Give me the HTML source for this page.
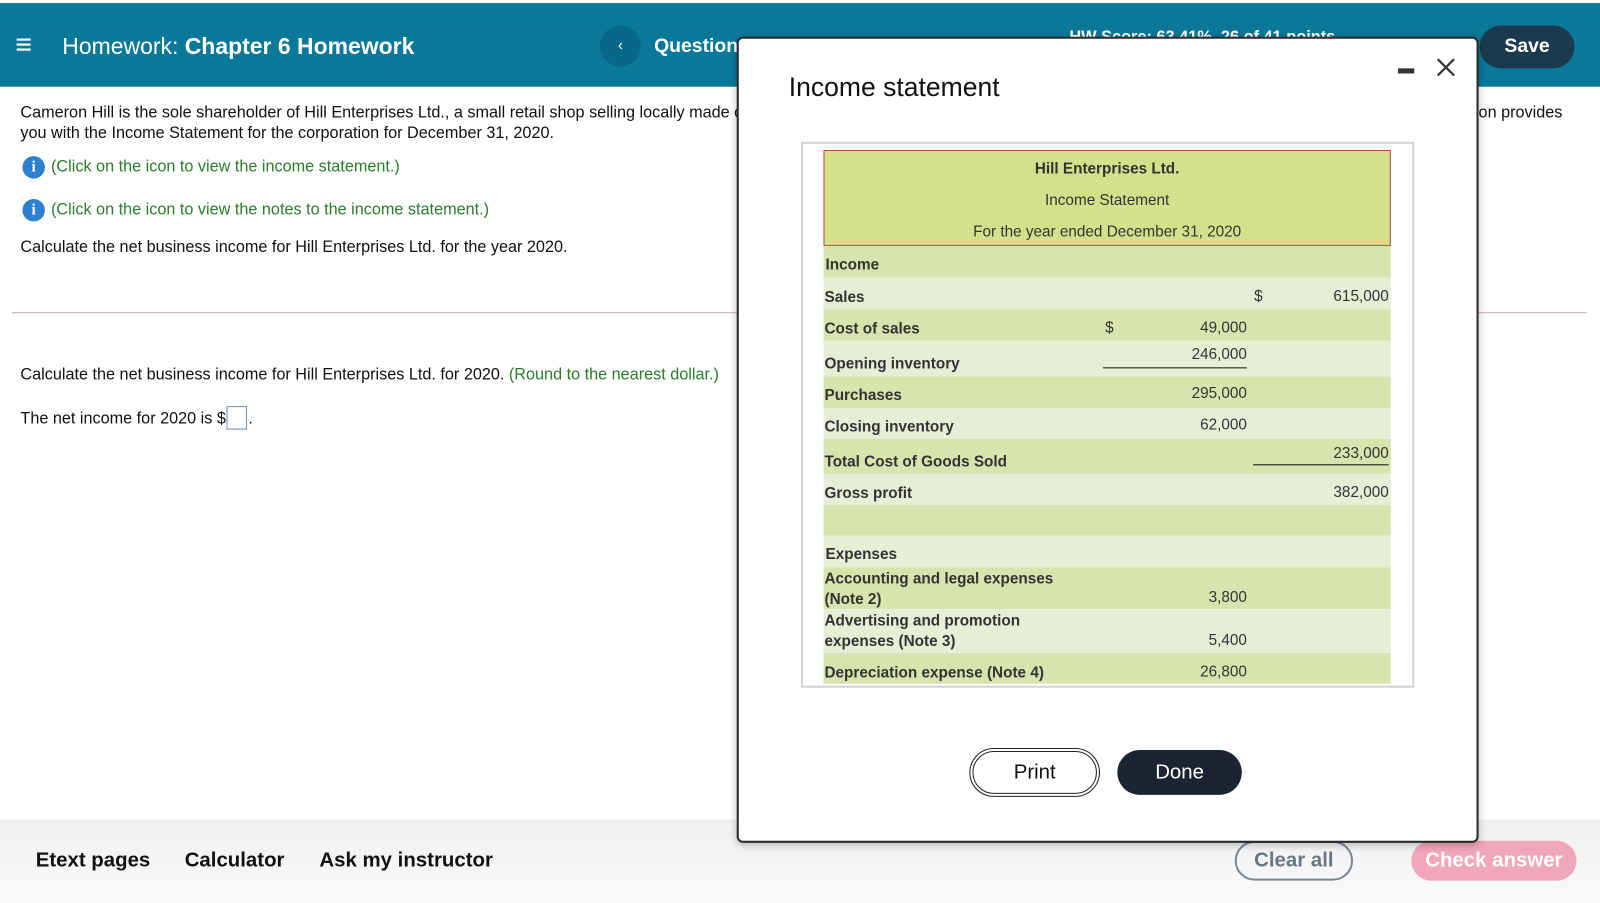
<!DOCTYPE html>
<html><head><meta charset="utf-8"><style>
*{margin:0;padding:0;box-sizing:border-box}
html,body{width:1600px;height:903px;overflow:hidden;background:#fff;font-family:"Liberation Sans",Arial,sans-serif}
#w{position:absolute;left:0;top:0;width:1568px;height:885px;transform:scale(1.0204);transform-origin:0 0}
.a{position:absolute;white-space:nowrap}
.t{font-size:15.9px;color:#111}
.g,.t.g{color:#2a7d2a}
.r{position:absolute;left:807px;width:556px}
.d{background:#d8e4ad}.l{background:#e6efd6}
.lb{position:absolute;left:1px;font-size:15px;font-weight:bold;color:#333;white-space:nowrap}
.v{position:absolute;font-size:15px;color:#333;text-align:right;white-space:nowrap}
.c1{right:141px}.c2{right:2px}
.info{position:absolute;width:22px;height:22px;border-radius:50%;background:#2f7fd0;color:#fff;font:bold 15px "Liberation Serif",serif;text-align:center;line-height:22px}
</style></head><body><div id="w">
<div class="a" style="left:0;top:3px;width:1568px;height:82px;background:#0a7899"></div>
<div class="a" style="left:15px;top:29px;color:#fff;font-size:28px;line-height:30px">&#8801;</div>
<div class="a" style="left:61px;top:33px;color:#fff;font-size:22.5px">Homework: <b>Chapter 6 Homework</b></div>
<div class="a" style="left:588px;top:25px;width:40px;height:40px;border-radius:50%;background:#086888;color:#fff;text-align:center;line-height:40px;font-size:15px">&#8249;</div>
<div class="a" style="left:641px;top:35px;color:#fff;font-size:19px;font-weight:bold">Question 3</div>
<div class="a" style="left:1048px;top:28px;color:#fff;font-size:16px;font-weight:bold">HW Score: 63.41%, 26 of 41 points</div>
<div class="a" style="left:1450px;top:25px;width:93px;height:42px;border-radius:21px;background:#1c3a4e;color:#fff;font-size:19px;font-weight:bold;text-align:center;line-height:42px">Save</div>

<div class="a t" style="left:20px;top:101px;line-height:20px">Cameron Hill is the sole shareholder of Hill Enterprises Ltd., a small retail shop selling locally made crafts. Her accountant, who has just completed the year-end work<br>you with the Income Statement for the corporation for December 31, 2020.</div>
<div class="a t" style="left:1449px;top:101px;line-height:20px;background:#fff;width:119px">on provides</div>
<div class="info" style="left:22px;top:153px">i</div>
<div class="a t g" style="left:50px;top:155px">(Click on the icon to view the income statement.)</div>
<div class="info" style="left:22px;top:195px">i</div>
<div class="a t g" style="left:50px;top:197px">(Click on the icon to view the notes to the income statement.)</div>
<div class="a t" style="left:20px;top:234px">Calculate the net business income for Hill Enterprises Ltd. for the year 2020.</div>
<div class="a" style="left:12px;top:306px;width:1543px;height:1px;background:#cfa6a6"></div>
<div class="a t" style="left:20px;top:359px">Calculate the net business income for Hill Enterprises Ltd. for 2020. <span class="g">(Round to the nearest dollar.)</span></div>
<div class="a t" style="left:20px;top:398px">The net income for 2020 is $<span style="display:inline-block;width:20px;height:23px;border:1px solid #6a8fb8;vertical-align:-6px;margin:0 1px"></span>.</div>

<div class="a" style="left:0;top:803px;width:1568px;height:82px;background:linear-gradient(#f0f0f0,#fafafa)"></div>
<div class="a" style="left:35px;top:832px;font-size:20px;font-weight:bold;color:#111">Etext pages</div>
<div class="a" style="left:181px;top:832px;font-size:20px;font-weight:bold;color:#111">Calculator</div>
<div class="a" style="left:313px;top:832px;font-size:20px;font-weight:bold;color:#111">Ask my instructor</div>
<div class="a" style="left:1210px;top:824px;width:116px;height:39px;border:2px solid #7a8794;border-radius:20px;color:#6b7684;font-size:20px;font-weight:bold;text-align:center;line-height:35px">Clear all</div>
<div class="a" style="left:1383px;top:824px;width:162px;height:39px;border-radius:20px;background:#f1a6b9;color:#fff;font-size:20px;font-weight:bold;text-align:center;line-height:39px">Check answer</div>

<div class="a" style="left:722px;top:36px;width:727px;height:790px;background:#fff;border:2px solid #2a2a2a;border-radius:6px;box-shadow:0 2px 8px rgba(0,0,0,.25)"></div>
<div class="a" style="left:773px;top:70px;font-size:26px;color:#111">Income statement</div>
<div class="a" style="left:1370px;top:67px;width:16px;height:5px;background:#333"></div>
<svg class="a" style="left:1408px;top:57px" width="18" height="18"><path d="M1 1L17 17M17 1L1 17" stroke="#333" stroke-width="2.2"/></svg>

<div class="a" style="left:785px;top:139px;width:601px;height:535px;border:2px solid #d4d4d4"></div>
<div class="a" style="left:807px;top:147px;width:556px;height:94px;background:#d4e08a;border:1px solid #b5493e"></div>
<div class="a" style="left:807px;top:157px;width:556px;text-align:center;font-size:15px;font-weight:bold;color:#333">Hill Enterprises Ltd.</div>
<div class="a" style="left:807px;top:188px;width:556px;text-align:center;font-size:15px;color:#333">Income Statement</div>
<div class="a" style="left:807px;top:219px;width:556px;text-align:center;font-size:15px;color:#333">For the year ended December 31, 2020</div>

<div class="r d" style="top:241px;height:31px"><div class="lb" style="top:10px;left:2px">Income</div></div>
<div class="r l" style="top:272px;height:31px"><div class="lb" style="top:11px">Sales</div><div class="v" style="left:422px;top:10px">$</div><div class="v c2" style="top:10px">615,000</div></div>
<div class="r d" style="top:303px;height:31px"><div class="lb" style="top:11px">Cost of sales</div><div class="v" style="left:276px;top:10px">$</div><div class="v c1" style="top:10px">49,000</div></div>
<div class="r l" style="top:334px;height:35px"><div class="lb" style="top:14px">Opening inventory</div><div class="v c1" style="top:5px">246,000</div><div class="a" style="left:274px;top:26px;width:141px;height:1px;background:#111"></div></div>
<div class="r d" style="top:369px;height:31px"><div class="lb" style="top:10px">Purchases</div><div class="v c1" style="top:8px">295,000</div></div>
<div class="r l" style="top:400px;height:30px"><div class="lb" style="top:10px">Closing inventory</div><div class="v c1" style="top:8px">62,000</div></div>
<div class="r d" style="top:430px;height:34px"><div class="lb" style="top:14px">Total Cost of Goods Sold</div><div class="v c2" style="top:6px">233,000</div><div class="a" style="left:421px;top:25px;width:133px;height:1px;background:#111"></div></div>
<div class="r l" style="top:464px;height:31px"><div class="lb" style="top:11px">Gross profit</div><div class="v c2" style="top:10px">382,000</div></div>
<div class="r d" style="top:495px;height:30px"></div>
<div class="r l" style="top:525px;height:31px"><div class="lb" style="top:10px;left:2px">Expenses</div></div>
<div class="r d" style="top:556px;height:41px"><div class="lb" style="top:2px;line-height:20px">Accounting and legal expenses<br>(Note 2)</div><div class="v c1" style="top:21px">3,800</div></div>
<div class="r l" style="top:597px;height:43px"><div class="lb" style="top:2px;line-height:20px">Advertising and promotion<br>expenses (Note 3)</div><div class="v c1" style="top:22px">5,400</div></div>
<div class="r d" style="top:640px;height:30px"><div class="lb" style="top:11px">Depreciation expense (Note 4)</div><div class="v c1" style="top:10px">26,800</div></div>

<div class="a" style="left:950px;top:733px;width:128px;height:48px;border:4px double #222;border-radius:24px;font-size:20px;color:#111;text-align:center;line-height:40px">Print</div>
<div class="a" style="left:1095px;top:735px;width:122px;height:44px;border-radius:22px;background:#1b2431;color:#fff;font-size:20px;text-align:center;line-height:44px">Done</div>
</div></body></html>
